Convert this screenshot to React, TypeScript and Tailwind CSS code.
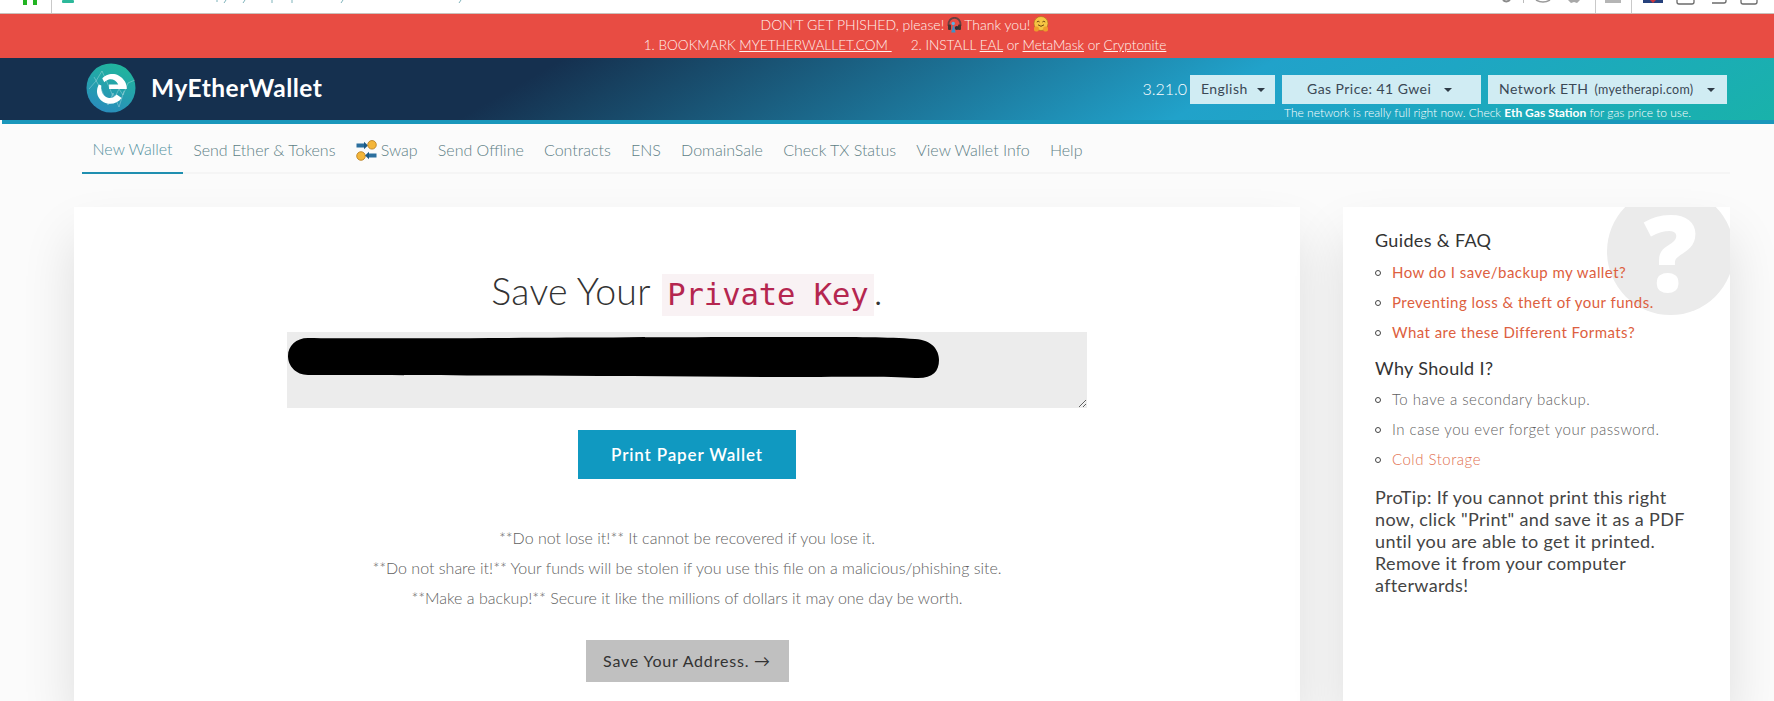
import React from "react";

const Chrome = () => (
  <div className="h-[14px] bg-white border-b border-[#c9c0bb] shrink-0">
    <svg width="1774" height="13" viewBox="0 0 1774 13" className="block">
      <rect x="23" y="0" width="4" height="5" fill="#22b422" />
      <rect x="33" y="0" width="4" height="5" fill="#22b422" />
      <rect x="62" y="0" width="12" height="3" rx="1" fill="#2cb89a" />
      <rect x="51" y="0" width="1" height="13" fill="#c9c9c9" />
      <path d="M217 0v2M226 0l-2 3M245 0l-2 3M272 0v3M292 0v3M343 0l-2 3M461 0l-2 3" stroke="#7fb3bb" strokeWidth="1" />
      <path d="M1503 0q3 3 7 0" stroke="#8a8a8a" strokeWidth="2" fill="none" />
      <rect x="1523" y="0" width="1" height="3" fill="#bbb" />
      <path d="M1536 0q7 4 14 0" stroke="#9a9a9a" strokeWidth="1.5" fill="none" />
      <path d="M1568 0l3 3 3-1 3 1 3-3z" fill="#a8a8a8" />
      <rect x="1595" y="0" width="1" height="13" fill="#c9c9c9" />
      <rect x="1605" y="0" width="16" height="3" fill="#b5b5b5" />
      <rect x="1631" y="0" width="1" height="13" fill="#c9c9c9" />
      <rect x="1643" y="0" width="20" height="3" fill="#26417c" />
      <path d="M1650 0l3 3 3-3z" fill="#c9353f" />
      <path d="M1677 0v2q0 2 2 2h13q2 0 2-2v-2" stroke="#6b6b6b" strokeWidth="1.3" fill="none" />
      <path d="M1712 3h12q2 0 2-2v-1" stroke="#6b6b6b" strokeWidth="1.3" fill="none" />
      <path d="M1741 0v2q0 2 2 2h12q2 0 2-2v-2" stroke="#6b6b6b" strokeWidth="1.3" fill="none" />
    </svg>
  </div>
);

const Headset = () => (
  <svg width="15" height="16" viewBox="0 0 15 16" className="inline-block align-[-3px] mx-[2.500px]">
    <path d="M1.5 9C1 3.500 4 .8 7.500 .8S14 3.500 13.500 9" stroke="#6a4040" strokeWidth="1.800" fill="none" />
    <rect x="1" y="7.500" width="3" height="5.500" rx="1" fill="#43342f" />
    <rect x="11" y="7.500" width="3" height="5.500" rx="1" fill="#43342f" />
    <circle cx="6.200" cy="6.500" r="1.700" fill="#5db1e4" />
    <path d="M4.200 15.500l1.700-7h1l1.700 7z" fill="#3f8fc4" />
    <circle cx="9.800" cy="11" r="2" fill="#2e2e36" />
  </svg>
);

const Hug = () => (
  <svg width="16" height="17" viewBox="0 0 16 17" className="inline-block align-[-3px] ml-[3px]">
    <circle cx="8" cy="7.500" r="7" fill="#f6c544" stroke="#a8741a" strokeWidth=".6" />
    <path d="M3.800 6q1.400-1.500 2.800 0M9.400 6q1.400-1.500 2.800 0" stroke="#6b4310" strokeWidth="1" fill="none" />
    <path d="M5 8.800q3 3 6 0" stroke="#6b4310" strokeWidth="1" fill="none" />
    <rect x="1" y="10.500" width="4.800" height="5" rx="1.800" fill="#ee9d2c" />
    <rect x="10.200" y="10.500" width="4.800" height="5" rx="1.800" fill="#ee9d2c" />
  </svg>
);

const Logo = () => (
  <svg width="50" height="50" viewBox="0 0 50 50" className="shrink-0">
    <defs>
      <linearGradient id="lg" x1="0.700" y1="0" x2="0.300" y2="1">
        <stop offset="0" stopColor="#20b79c" />
        <stop offset="1" stopColor="#2a8bbd" />
      </linearGradient>
    </defs>
    <circle cx="25" cy="25" r="24.500" fill="url(#lg)" />
    <path d="M3 26l7-8 6-10 8 18 4 10 5-10 4 6 5-12 7-3M8 14l8 14 6 14 5-12 6 14 5-16" stroke="#ffffff" strokeOpacity=".28" strokeWidth="1" fill="none" />
    <path d="M16.300 15.600C19 11.500 27 9.500 32.500 12.500C38 15.500 41 20.500 40.800 25.900L23.100 25.900L23.100 21.400L32.300 21.400C30.500 17.500 26.500 15.800 23.800 16.300C21.500 16.700 19.500 18 18.300 19.200Z" fill="#ffffff" />
    <path d="M12.900 21.400C9.200 27.500 10.500 37.500 21.500 40.500C26.500 41.500 32.500 39.700 35.700 35L30.600 31.600C28 34.700 25 35.500 22 34.800C18.500 34 14.500 30 15.300 22.500Z" fill="#ffffff" />
  </svg>
);

const SwapIcon = () => (
  <svg width="21" height="21" viewBox="0 0 21 21" className="shrink-0">
    <rect x="0.500" y="3.500" width="8" height="4" fill="#2b6f9e" />
    <path d="M8 1.800l4 3.700-4 3.700z" fill="#1e5a85" />
    <circle cx="16" cy="4.800" r="4.300" fill="#f4b63a" stroke="#b57a1a" strokeWidth=".8" />
    <circle cx="5" cy="16" r="4.300" fill="#f4b63a" stroke="#b57a1a" strokeWidth=".8" />
    <rect x="12.500" y="13.500" width="8" height="4" fill="#2b6f9e" />
    <path d="M13 11.800l-4 3.700 4 3.700z" fill="#1e5a85" />
  </svg>
);

const Caret = () => (
  <span className="inline-block w-0 h-0 mt-[2px] border-x-[4px] border-x-transparent border-t-[4px] border-t-[#2f3b46]" />
);

const Select = ({ w, children, justify }: { w: string; children: React.ReactNode; justify: string }) => (
  <div className={`${w} ${justify} h-[29px] pb-[2px] bg-[#d0ecf3] flex items-center text-[14px] tracking-[0.45px] text-[#3a4855] font-normal`}>
    {children}
  </div>
);

const Bullet = () => (
  <span className="absolute left-[-17px] top-[13px] w-[6px] h-[6px] rounded-full border border-[#444]" />
);

const Item = ({ c, children }: { c: string; children: React.ReactNode }) => (
  <li className={`relative h-[30px] leading-[30px] ${c}`}>
    <Bullet />
    {children}
  </li>
);

const Tab = ({ children }: { children: React.ReactNode }) => (
  <a className="h-[50px] px-[10.100px] flex items-center gap-[4px] pt-[2px]">{children}</a>
);

export default function App() {
  return (
    <div className="h-[701px] w-[1774px] overflow-hidden flex flex-col bg-[#fbfbfb] font-['Lato',sans-serif]">
      <Chrome />
      <div className="h-[44px] shrink-0 bg-[#e84c43] text-[#fff4f0] font-light text-[14px] leading-[20px] text-center pt-[1px] pl-[36px]">
        <div>
          DON'T GET PHISHED, please!
          <Headset />
          Thank you!
          <Hug />
        </div>
        <div className="text-[13.650px]">
          1. BOOKMARK <u>MYETHERWALLET.COM&nbsp;</u>
          <span className="inline-block w-[19px]" />
          2. INSTALL <u>EAL</u> or <u>MetaMask</u> or <u>Cryptonite</u>
        </div>
      </div>

      <header className="h-[62px] shrink-0 flex bg-[linear-gradient(150deg,#15304f_0%,#15304f_30%,#17405f_35%,#21a2ca_68%,#1ea6c4_78%,#19b2aa_100%)] pl-[86px] pr-[47px]">
        <div className="flex items-center gap-[15px] pb-[2px]">
          <Logo />
          <span className="text-white font-bold text-[24.500px] tracking-[0.5px]">MyEtherWallet</span>
        </div>
        <div className="ml-auto flex flex-col items-end pt-[17px]">
          <div className="flex items-center">
            <span className="text-white font-light text-[16px] mr-[3px] pb-[2px]">3.21.0</span>
            <Select w="w-[85px]" justify="pl-[11px] gap-[9px]">English <Caret /></Select>
            <span className="w-[7px]" />
            <Select w="w-[199px]" justify="pl-[25px] gap-[13px]">Gas Price: 41 Gwei <Caret /></Select>
            <span className="w-[7px]" />
            <Select w="w-[239px]" justify="pl-[11px] gap-[13px]">
              <span>Network ETH <span className="text-[12.500px] tracking-[0.3px] ml-[2px]">(myetherapi.com)</span></span> <Caret />
            </Select>
          </div>
          <div className="text-white font-light text-[12px] leading-[15px] mr-[36px] mt-[1px]">
            The network is really full right now. Check <b className="font-bold text-white">Eth Gas Station</b> for gas price to use.
          </div>
        </div>
      </header>
      <div className="h-[4px] ml-[2px] shrink-0 bg-[#1a97bb]" />

      <nav className="h-[50px] shrink-0 ml-[82px] mr-[44px] flex border-b-2 border-[#f5f5f5] text-[16px] font-light text-[#5e7f86]">
        <a className="h-[50px] px-[10.500px] flex items-center pt-[2px] border-b-2 border-[#1f8fb0] text-[#55929f]">New Wallet</a>
        <Tab>Send Ether &amp; Tokens</Tab>
        <Tab><SwapIcon />Swap</Tab>
        <Tab>Send Offline</Tab>
        <Tab>Contracts</Tab>
        <Tab>ENS</Tab>
        <Tab>DomainSale</Tab>
        <Tab>Check TX Status</Tab>
        <Tab>View Wallet Info</Tab>
        <Tab>Help</Tab>
      </nav>

      <main className="flex-1 min-h-0 flex gap-[43px] pl-[74px] pt-[33px]">
        <section className="w-[1226px] bg-white shadow-[0_30px_50px_rgba(0,0,0,0.12)] flex flex-col items-center">
          <h1 className="mt-[63px] h-[42px] leading-[42px] text-[37.500px] font-light text-[#333] tracking-[0.2px] whitespace-nowrap">
            Save Your{" "}
            <code className="inline-block px-[5px] ml-[2px] bg-[#f9f2f4] text-[#b5264f] text-[30.500px] font-['DejaVu_Sans_Mono',monospace] tracking-[-0.05px]">Private Key</code>.
          </h1>
          <div className="relative mt-[20px] w-[800px] h-[76px]">
            <textarea readOnly className="block w-[800px] h-[76px] bg-[#ececec] outline-none" />
            <svg width="653" height="44" viewBox="0 0 654 44" className="absolute left-[1px] top-[4px]">
              <path d="M20 2C100 3 300 1 520 1C570 1 600 1 628 3C645 4 652 14 652 24C652 36 645 43 628 42C600 40 560 41 480 41C300 40 130 39 20 39C8 39 0 30 0 20C0 10 8 2 20 2Z" fill="#000" />
            </svg>
          </div>
          <button className="mt-[22px] w-[218px] h-[49px] bg-[#1099c1] text-white text-[17px] font-semibold tracking-[0.85px]">Print Paper Wallet</button>
          <div className="mt-[44px] text-center font-light text-[16px] leading-[30px] text-[#5f5f5f]">
            <p>**Do not lose it!** It cannot be recovered if you lose it.</p>
            <p>**Do not share it!** Your funds will be stolen if you use this file on a malicious/phishing site.</p>
            <p>**Make a backup!** Secure it like the millions of dollars it may one day be worth.</p>
          </div>
          <button className="mt-[27px] w-[203px] h-[42px] bg-[#c0c0c0] text-[#333] text-[16px] tracking-[0.8px]">Save Your Address. →</button>
        </section>

        <aside className="relative w-[387px] bg-white shadow-[0_30px_50px_rgba(0,0,0,0.12)] pl-[32px] pr-[30px] pt-[18px]">
          <div className="absolute inset-0 overflow-hidden">
            <div className="absolute left-[264px] top-[-19px] w-[127px] h-[127px] rounded-full bg-[#ebebeb]" />
          </div>
          <span className="absolute left-[264px] top-[4px] w-[127px] h-[80px] leading-[80px] text-center text-white font-['Open_Sans',sans-serif] font-extrabold text-[106px]">?</span>
          <div className="relative">
            <h4 className="text-[18px] leading-[30px] text-[#333] tracking-[0.35px]">Guides &amp; FAQ</h4>
            <ul className="mt-[2px] ml-[17px] text-[15px] text-[#dd6040] tracking-[0.45px]">
              <Item c="">How do I save/backup my wallet?</Item>
              <Item c="">Preventing loss &amp; theft of your funds.</Item>
              <Item c="">What are these Different Formats?</Item>
            </ul>
            <h4 className="mt-[6px] text-[18px] leading-[30px] text-[#333] tracking-[0.35px]">Why Should I?</h4>
            <ul className="mt-[1px] ml-[17px] text-[15px] font-light text-[#5f5f5f] tracking-[0.5px]">
              <Item c="">To have a secondary backup.</Item>
              <Item c="">In case you ever forget your password.</Item>
              <Item c="text-[#e2704f]">Cold Storage</Item>
            </ul>
            <p className="mt-[12px] text-[18px] leading-[22px] text-[#444] tracking-[0.35px]">
              ProTip: If you cannot print this right now, click "Print" and save it as a PDF until you are able to get it printed. Remove it from your computer afterwards!
            </p>
          </div>
        </aside>
      </main>
    </div>
  );
}
